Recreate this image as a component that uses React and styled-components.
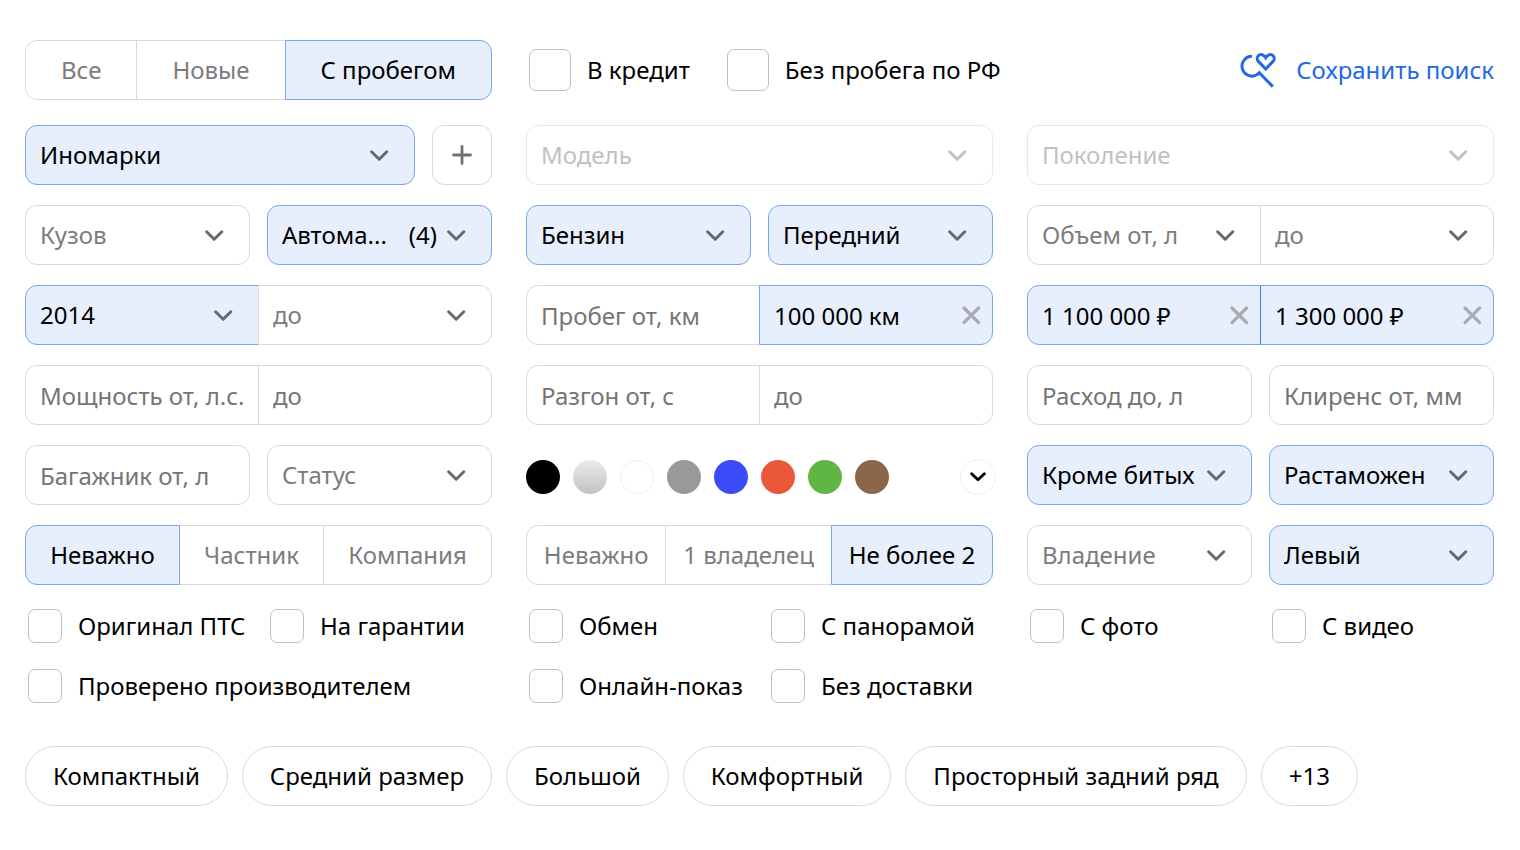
import React, { useState } from 'react';
import styled, { createGlobalStyle, css } from 'styled-components';

const GlobalStyle = createGlobalStyle`
  * {
    box-sizing: border-box;
  }

  body {
    margin: 0;
    background: #fff;
  }

  body, button, input, select {
    font-family: 'Noto Sans', 'Open Sans', sans-serif;
    font-size: 24px;
    line-height: 32px;
    color: #000;
  }
`;

const colors = {
  border: '#d9d9d9',
  borderDisabled: '#e8e8e8',
  active: '#78a7ee',
  activeDivider: '#4283ea',
  activeBg: '#e7eefc',
  muted: '#7c7c7c',
  icon: '#69696c',
  disabled: '#c1c1c1',
  link: '#2469e4',
};

const Page = styled.main`
  padding: 40px 26px 44px 25px;
`;

const Columns = styled.div`
  display: grid;
  grid-template-columns: repeat(3, minmax(0, 1fr));
  gap: 20px 34px;
`;

const Header = styled(Columns)`
  align-items: center;
  margin-bottom: 25px;
`;

const HeaderChecks = styled.div`
  display: flex;
  gap: 34px;
  white-space: nowrap;
`;

const Cell = styled.div`
  display: grid;
  grid-template-columns: ${({ $columns }) => $columns || 'repeat(2, minmax(0, 1fr))'};
  gap: 17px;
`;

/* Fields that share one frame: only the outer corners are round */
const Joined = styled.div`
  display: flex;

  && > * {
    flex: ${({ $auto }) => ($auto ? '1 1 auto' : '1 1 0')};
    border-radius: 0;
  }

  && > * + * {
    margin-left: -1px;
    ${({ $filled }) => $filled && `border-left-color: ${colors.activeDivider};`}
  }

  && > :first-child {
    border-radius: 12px 0 0 12px;
  }

  && > :last-child {
    border-radius: 0 12px 12px 0;
  }
`;

const frame = css`
  height: 60px;
  min-width: 0;
  border: 1px solid ${colors.border};
  border-radius: 12px;
  background: #fff;

  ${({ $active }) =>
    $active &&
    css`
      border-color: ${colors.active};
      background: ${colors.activeBg};
    `}
`;

const Segment = styled.button`
  ${frame}
  padding: 0 8px;
  color: ${({ $active }) => ($active ? '#000' : colors.muted)};
  white-space: nowrap;
  cursor: pointer;
  z-index: ${({ $active }) => ($active ? 1 : 0)};
`;

const Field = styled.div`
  ${frame}
  display: grid;
  grid-template-columns: minmax(0, 1fr);
  align-items: center;
  ${({ $disabled }) => $disabled && `border-color: ${colors.borderDisabled};`}

  > * {
    grid-area: 1 / 1;
  }
`;

const Select = styled.select`
  appearance: none;
  width: 100%;
  height: 58px;
  padding: 0 50px 0 14px;
  border: 0;
  border-radius: 12px;
  background: transparent;
  color: ${({ $active }) => ($active ? '#000' : colors.muted)};
  cursor: pointer;

  &:disabled {
    color: ${colors.disabled};
    opacity: 1;
    cursor: default;
  }
`;

const Input = styled.input`
  width: 100%;
  height: 58px;
  padding: 0 8px 0 14px;
  border: 0;
  border-radius: 12px;
  background: transparent;

  &::placeholder {
    color: #757575;
    opacity: 1;
  }
`;

const Count = styled.span`
  justify-self: end;
  margin-right: 54px;
  pointer-events: none;
`;

const ChevronIcon = styled.svg`
  justify-self: end;
  margin-right: 24px;
  pointer-events: none;
  color: ${({ $disabled }) => ($disabled ? colors.disabled : colors.icon)};
`;

const ClearButton = styled.button`
  justify-self: end;
  display: grid;
  margin-right: 11px;
  padding: 0;
  border: 0;
  background: transparent;
  color: #a9abb1;
  cursor: pointer;
`;

const AddButton = styled.button`
  ${frame}
  display: grid;
  place-items: center;
  padding: 0;
  color: #707070;
  cursor: pointer;
`;

const CheckLabel = styled.label`
  display: flex;
  align-items: center;
  gap: 16px;
  height: 60px;
  padding-left: 3px;
  white-space: nowrap;
  cursor: pointer;
`;

const CheckBox = styled.input`
  appearance: none;
  flex: none;
  width: ${({ $large }) => ($large ? 42 : 34)}px;
  height: ${({ $large }) => ($large ? 42 : 34)}px;
  margin: 0;
  border: 1px solid #c0c0c0;
  border-radius: 7px;
  background: #fff;
  cursor: pointer;

  &:checked {
    border-color: ${colors.active};
    background: ${colors.activeBg};
  }
`;

const SaveLink = styled.a`
  display: flex;
  align-items: center;
  justify-content: flex-end;
  gap: 20px;
  color: ${colors.link};
  text-decoration: none;
  white-space: nowrap;
`;

const Swatches = styled.div`
  display: flex;
  align-items: center;
  gap: 13px;
  padding-top: 4px;
`;

const Swatch = styled.button`
  width: 34px;
  height: 34px;
  padding: 0;
  border: ${({ $outlined }) => ($outlined ? '1px solid #eeeef5' : '0')};
  border-radius: 50%;
  background: ${({ $fill }) => $fill};
  cursor: pointer;
`;

const MoreColors = styled.button`
  display: grid;
  place-items: center;
  width: 36px;
  height: 36px;
  margin: 0 -3px 0 auto;
  padding: 0;
  border: 1px solid #eeeef5;
  border-radius: 50%;
  background: #fff;
  color: #000;
  cursor: pointer;
`;

const Checks = styled(Columns)`
  margin-top: 11px;
  row-gap: 0;
`;

const Chips = styled.div`
  display: flex;
  flex-wrap: wrap;
  gap: 14px;
  margin-top: 30px;
`;

const Chip = styled.button`
  height: 60px;
  padding: 0 27px;
  border: 1px solid ${colors.border};
  border-radius: 30px;
  background: #fff;
  white-space: nowrap;
  cursor: pointer;
`;

function Chevron({ disabled }) {
  return (
    <ChevronIcon $disabled={disabled} width="22" height="14" viewBox="0 0 22 14" fill="none" aria-hidden="true">
      <path d="M3.6 3.8 11.2 11.2 18.8 3.8" stroke="currentColor" strokeWidth="3" strokeLinecap="round" strokeLinejoin="round" />
    </ChevronIcon>
  );
}

function SelectField({ label, value, count, disabled }) {
  return (
    <Field $active={Boolean(value)} $disabled={disabled}>
      <Select aria-label={label} $active={Boolean(value)} disabled={disabled} defaultValue={value || label}>
        <option>{value || label}</option>
      </Select>
      {count && <Count>({count})</Count>}
      <Chevron disabled={disabled} />
    </Field>
  );
}

function TextField({ label, value: initial = '' }) {
  const [value, setValue] = useState(initial);

  return (
    <Field $active={value !== ''}>
      <Input
        type="text"
        aria-label={label}
        placeholder={label}
        value={value}
        onChange={(e) => setValue(e.target.value)}
      />
      {value && (
        <ClearButton type="button" aria-label="Очистить" onClick={() => setValue('')}>
          <svg width="20" height="20" viewBox="0 0 20 20" fill="none">
            <path d="M3 3 17.6 17.6M17.6 3 3 17.6" stroke="currentColor" strokeWidth="3.2" strokeLinecap="round" />
          </svg>
        </ClearButton>
      )}
    </Field>
  );
}

function Segments({ options, initial }) {
  const [selected, setSelected] = useState(initial);

  return (
    <Joined $auto role="group">
      {options.map((option) => (
        <Segment
          key={option}
          type="button"
          $active={option === selected}
          aria-pressed={option === selected}
          onClick={() => setSelected(option)}
        >
          {option}
        </Segment>
      ))}
    </Joined>
  );
}

function Check({ label, large }) {
  return (
    <CheckLabel>
      <CheckBox type="checkbox" $large={large} />
      {label}
    </CheckLabel>
  );
}

const swatches = [
  { name: 'Чёрный', fill: '#000' },
  { name: 'Серебристый', fill: 'linear-gradient(#ececec, #c2c2c2)' },
  { name: 'Белый', fill: '#fff', outlined: true },
  { name: 'Серый', fill: '#9a9997' },
  { name: 'Синий', fill: '#3b4bf7' },
  { name: 'Красный', fill: '#e95839' },
  { name: 'Зелёный', fill: '#5fb643' },
  { name: 'Коричневый', fill: '#8a664a' },
];

const chips = ['Компактный', 'Средний размер', 'Большой', 'Комфортный', 'Просторный задний ряд', '+13'];

function App() {
  return (
    <Page>
      <GlobalStyle />
      <Header as="header">
        <Segments options={['Все', 'Новые', 'С пробегом']} initial="С пробегом" />
        <HeaderChecks>
          <Check large label="В кредит" />
          <Check large label="Без пробега по РФ" />
        </HeaderChecks>
        <SaveLink href="#save">
          <svg width="36" height="36" viewBox="0 0 36 36" fill="none" stroke="currentColor" strokeWidth="3" aria-hidden="true">
            <path d="M12 4.3A9.9 9.9 0 1 0 19.3 20.8L32.8 34.6" />
            <path d="M25.7 17 18.4 9.4C16.8 7.6 16.8 5.2 18.3 3.7 20.3 1.8 23.7 2.4 25.7 5.7 27.7 2.4 31.1 1.8 33.1 3.7 34.6 5.2 34.6 7.6 33 9.4Z" />
          </svg>
          Сохранить поиск
        </SaveLink>
      </Header>

      <Columns>
        <Cell $columns="minmax(0, 1fr) 60px">
          <SelectField label="Марка" value="Иномарки" />
          <AddButton type="button" aria-label="Добавить">
            <svg width="22" height="22" viewBox="0 0 22 22" fill="none">
              <path d="M11 2.5V19.5M2.5 11H19.5" stroke="currentColor" strokeWidth="2.8" strokeLinecap="round" />
            </svg>
          </AddButton>
        </Cell>
        <SelectField label="Модель" disabled />
        <SelectField label="Поколение" disabled />

        <Cell>
          <SelectField label="Кузов" />
          <SelectField label="Коробка" value="Автома..." count={4} />
        </Cell>
        <Cell>
          <SelectField label="Двигатель" value="Бензин" />
          <SelectField label="Привод" value="Передний" />
        </Cell>
        <Joined>
          <SelectField label="Объем от, л" />
          <SelectField label="до" />
        </Joined>

        <Joined>
          <SelectField label="Год от" value="2014" />
          <SelectField label="до" />
        </Joined>
        <Joined>
          <TextField label="Пробег от, км" />
          <TextField label="Пробег до, км" value="100 000 км" />
        </Joined>
        <Joined $filled>
          <TextField label="Цена от, ₽" value="1 100 000 ₽" />
          <TextField label="Цена до, ₽" value="1 300 000 ₽" />
        </Joined>

        <Joined>
          <TextField label="Мощность от, л.с." />
          <TextField label="до" />
        </Joined>
        <Joined>
          <TextField label="Разгон от, с" />
          <TextField label="до" />
        </Joined>
        <Cell>
          <TextField label="Расход до, л" />
          <TextField label="Клиренс от, мм" />
        </Cell>

        <Cell>
          <TextField label="Багажник от, л" />
          <SelectField label="Статус" />
        </Cell>
        <Swatches>
          {swatches.map(({ name, fill, outlined }) => (
            <Swatch key={name} type="button" aria-label={name} $fill={fill} $outlined={outlined} />
          ))}
          <MoreColors type="button" aria-label="Все цвета">
            <svg width="18" height="12" viewBox="0 0 18 12" fill="none">
              <path d="M2.6 2.8 9 8.8 15.4 2.8" stroke="currentColor" strokeWidth="2.8" strokeLinecap="round" strokeLinejoin="round" />
            </svg>
          </MoreColors>
        </Swatches>
        <Cell>
          <SelectField label="Состояние" value="Кроме битых" />
          <SelectField label="Таможня" value="Растаможен" />
        </Cell>

        <Segments options={['Неважно', 'Частник', 'Компания']} initial="Неважно" />
        <Segments options={['Неважно', '1 владелец', 'Не более 2']} initial="Не более 2" />
        <Cell>
          <SelectField label="Владение" />
          <SelectField label="Руль" value="Левый" />
        </Cell>
      </Columns>

      <Checks>
        <Cell>
          <Check label="Оригинал ПТС" />
          <Check label="На гарантии" />
        </Cell>
        <Cell>
          <Check label="Обмен" />
          <Check label="С панорамой" />
        </Cell>
        <Cell>
          <Check label="С фото" />
          <Check label="С видео" />
        </Cell>
        <Check label="Проверено производителем" />
        <Cell>
          <Check label="Онлайн-показ" />
          <Check label="Без доставки" />
        </Cell>
      </Checks>

      <Chips>
        {chips.map((chip) => (
          <Chip key={chip} type="button">
            {chip}
          </Chip>
        ))}
      </Chips>
    </Page>
  );
}

export default App;
